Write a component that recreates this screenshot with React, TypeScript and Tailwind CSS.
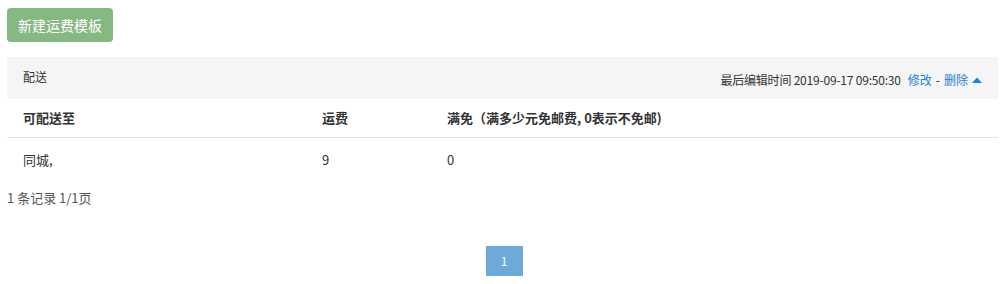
import React from 'react';

const font = { fontFamily: '"Noto Sans CJK SC", "Noto Sans", sans-serif' };

export default function App() {
  return (
    <div className="w-[1008px] h-[284px] bg-white text-[#333] overflow-hidden" style={font}>
      <div className="pt-2 pl-[7px] pr-[10px]">
        <button className="h-[34px] px-[11px] rounded-[4px] bg-[#86b982] text-white text-[14px] leading-none">
          新建运费模板
        </button>

        <div className="mt-[15px]">
          <div className="h-[42px] bg-[#f5f5f5] flex items-center justify-between pl-4 pr-[15px] text-[12px]">
            <span className="-mt-[2px]">配送</span>
            <div className="flex items-center mt-[3px] gap-[5px]">
              <span className="tracking-[-0.2px]">最后编辑时间 2019-09-17 09:50:30</span>
              <span className="flex items-center text-[#1e7fd8]">
                <span className="ml-[2px]">修改</span>
                <span className="text-[#333] mx-[4px]">-</span>
                <span>删除</span>
                <svg width="12" height="8" viewBox="0 0 12 8" className="ml-[3px]">
                  <path d="M1 7 L6 1.5 L11 7 Z" fill="#1e7fd8" />
                </svg>
              </span>
            </div>
          </div>

          <div className="grid grid-cols-[299px_125px_1fr] h-[39px] items-center border-b border-[#e5e5e5] text-[13px] font-bold">
            <div className="pl-4">可配送至</div>
            <div className="pl-4">运费</div>
            <div className="pl-4">满免（满多少元免邮费, 0表示不免邮)</div>
          </div>
          <div className="grid grid-cols-[299px_125px_1fr] h-[43px] items-center text-[13px]">
            <div className="pl-4">同城,</div>
            <div className="pl-4">9</div>
            <div className="pl-4">0</div>
          </div>
        </div>

        <div className="mt-[10px] text-[13px] text-[#555] leading-none">1 条记录 1/1页</div>
      </div>

      <div className="flex justify-center mt-[42px]">
        <div className="w-[37px] h-[30px] bg-[#6eaad7] text-white text-[12px] flex items-center justify-center">
          1
        </div>
      </div>
    </div>
  );
}
